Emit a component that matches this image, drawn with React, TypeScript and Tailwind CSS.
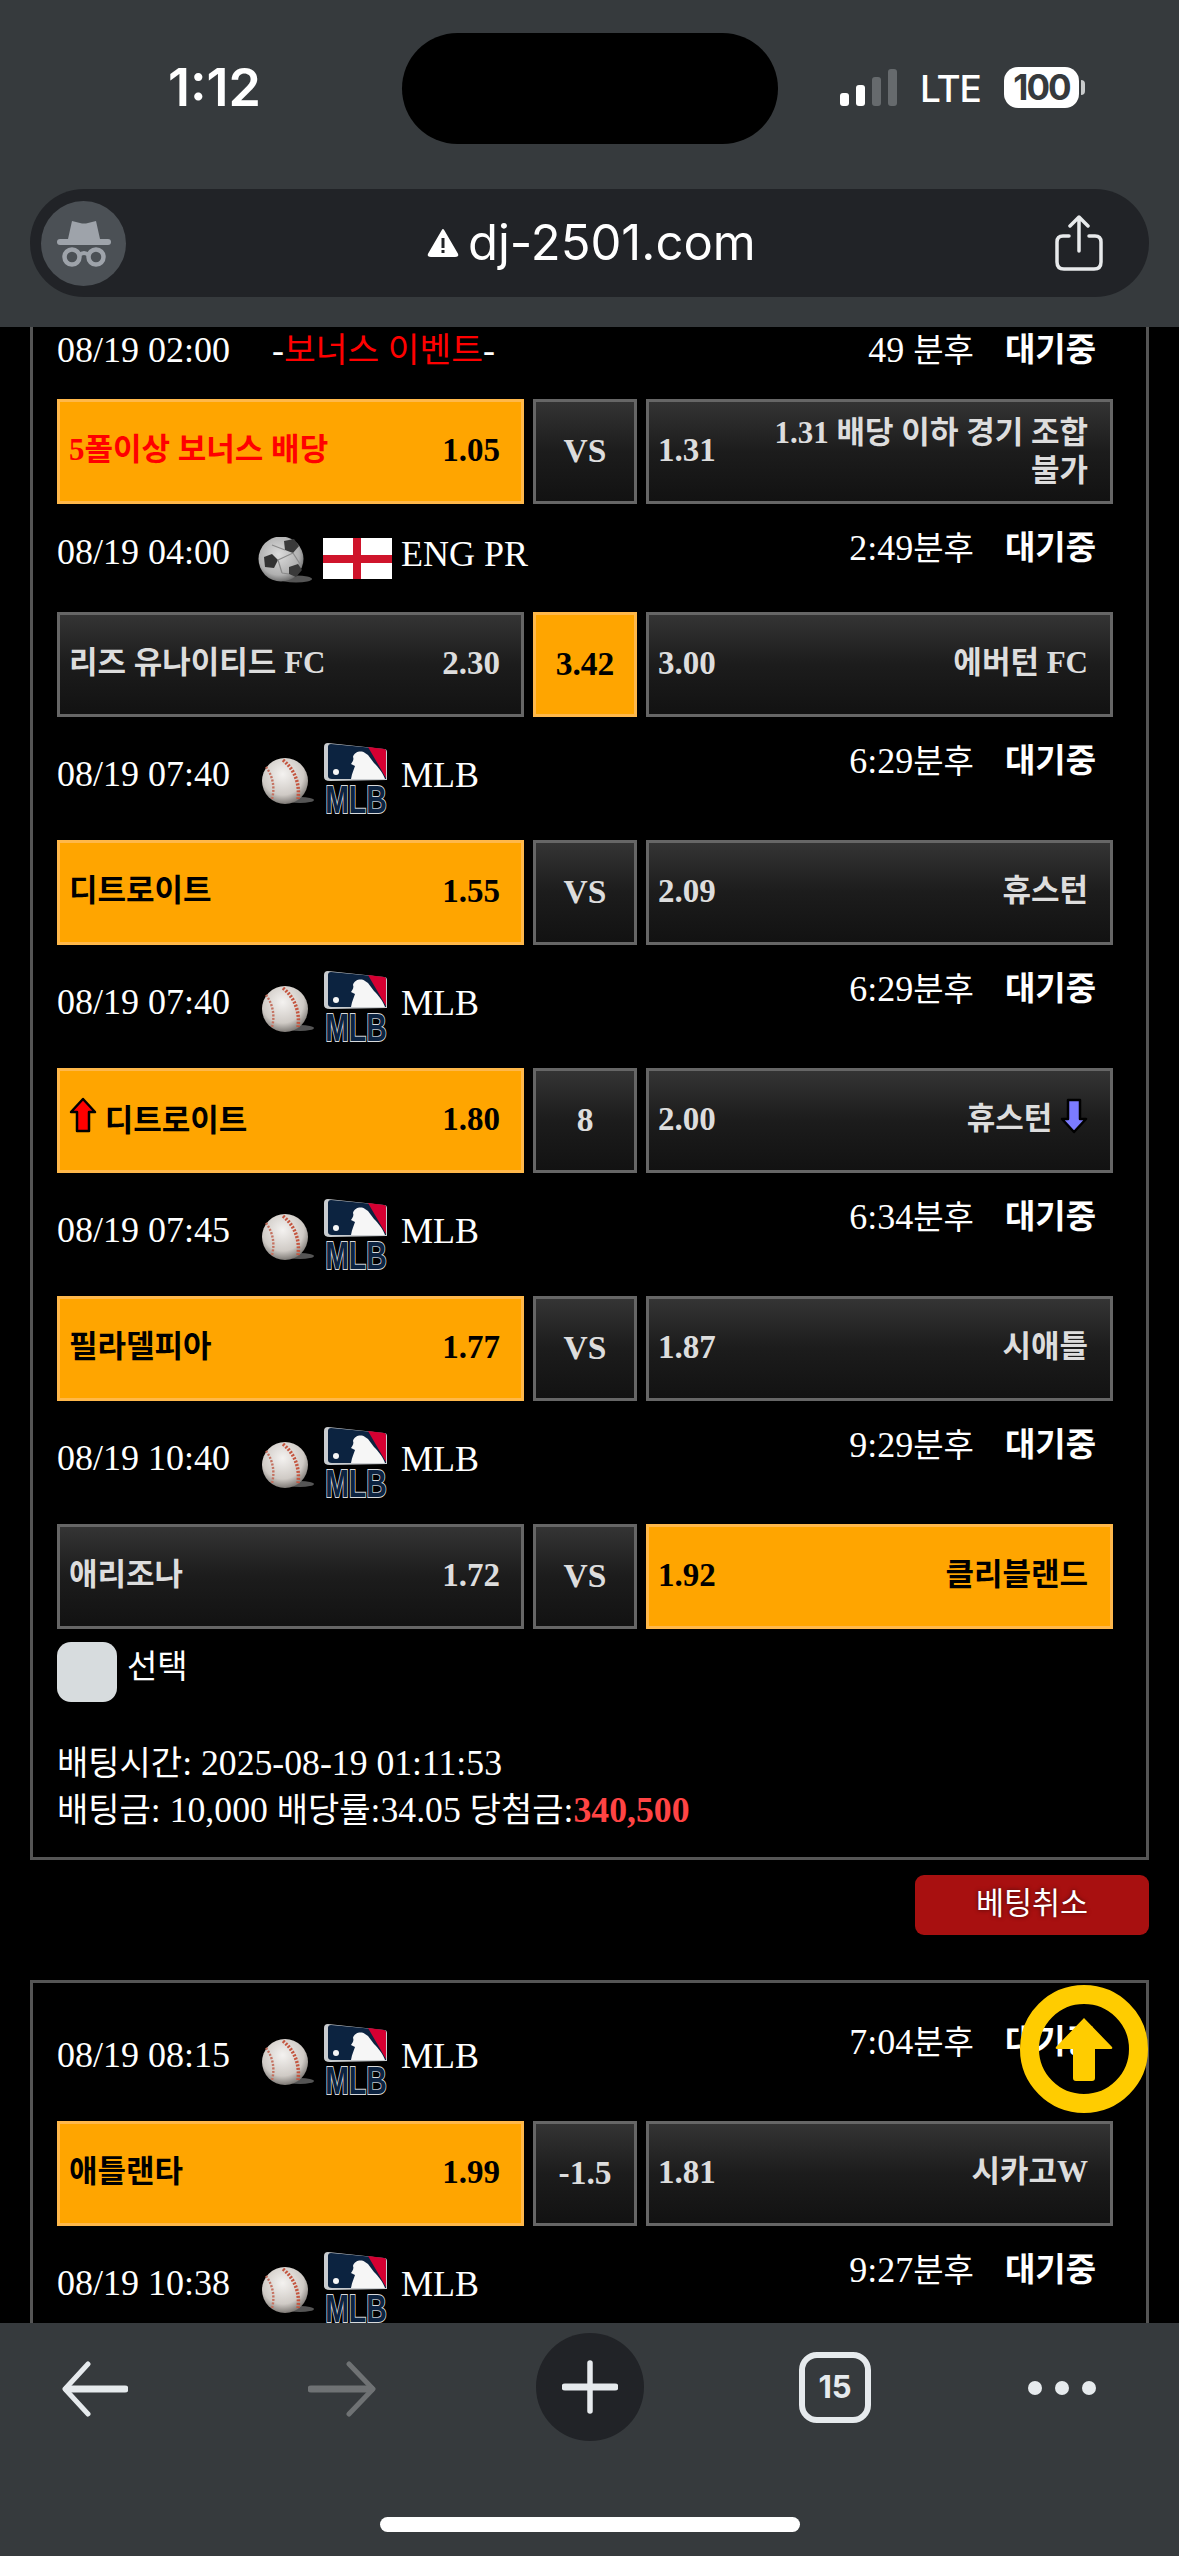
import React from "react";

const serif = "[font-family:'Liberation_Serif','Noto_Sans_CJK_KR',serif]";

function K({ children }: { children: React.ReactNode }) {
  return <span className="text-[33px]">{children}</span>;
}

function SoccerBall() {
  return (
    <svg width="54" height="46" viewBox="0 0 54 46" className="shrink-0">
      <defs>
        <radialGradient id="sb" cx="45%" cy="40%" r="65%">
          <stop offset="0%" stopColor="#dcdcdc" />
          <stop offset="70%" stopColor="#b0b0b0" />
          <stop offset="100%" stopColor="#5a5a5a" />
        </radialGradient>
      </defs>
      <ellipse cx="38" cy="42" rx="16" ry="3.5" fill="#555" />
      <circle cx="23" cy="22" r="22.5" fill="url(#sb)" />
      <polygon points="26,4 36,2 41,9 35,16 27,13" fill="#3a3a3a" />
      <polygon points="6,20 14,17 20,23 16,31 7,30" fill="#333" />
      <polygon points="31,30 40,27 44,33 38,40 31,37" fill="#3a3a3a" />
      <path d="M27 13 L14 8 M20 23 L35 16 M20 23 L24 36 M35 16 L42 27 M24 36 L31 37" stroke="#8a8a8a" strokeWidth="1.2" fill="none" />
    </svg>
  );
}

function Baseball() {
  return (
    <svg width="52" height="46" viewBox="0 0 52 46" className="shrink-0">
      <defs>
        <radialGradient id="bb" cx="45%" cy="35%" r="70%">
          <stop offset="0%" stopColor="#f4f2f0" />
          <stop offset="65%" stopColor="#cfcac5" />
          <stop offset="100%" stopColor="#6a6662" />
        </radialGradient>
      </defs>
      <ellipse cx="38" cy="42" rx="14" ry="3" fill="#555" />
      <circle cx="23" cy="23" r="23" fill="url(#bb)" />
      <path d="M21 2 C33 12 38 26 36 41" stroke="#c4553f" strokeWidth="3.5" strokeDasharray="2 1.5" fill="none" />
      <path d="M4 9 C11 18 13 30 10 41" stroke="#c4705f" strokeWidth="2.4" strokeDasharray="2 1.5" fill="none" />
    </svg>
  );
}

function MlbLogo() {
  return (
    <svg width="64" height="82" viewBox="0 0 64 82" className="shrink-0 -mb-[12px]">
      <path d="M4 0 L60 6 Q63 6 63 9 L63 37 L6 38 Q0 38 0 34 L0 4 Q0 0 4 0 Z" fill="#c9cccf" />
      <path d="M7 1 L60 6 Q62 6 62 9 L62 36 L8 36 Q4 36 4 33 L4 4 Q4 1 7 1 Z" fill="#0c2340" />
      <path d="M44 4 L60 6 Q62 6 62 9 L62 35 Z" fill="#d50032" />
      <path d="M27 36 C28 30 30 26 31 23 L27 21 C29 18 30 16 29 14 C30 9 37 7 41 10 L44 12 L50 20 C54 24 59 30 61 36 Z" fill="#f6f6f6" />
      <circle cx="12" cy="29" r="3" fill="#f6f6f6" />
      <text x="32" y="51.5" transform="scale(1 1.35)" textAnchor="middle" fontFamily="Liberation Sans" fontWeight="700" fontSize="28.5" fill="#0c2340" stroke="#d8dadc" strokeWidth="1.4" paintOrder="stroke">
        MLB
      </text>
    </svg>
  );
}

function EnglandFlag() {
  return (
    <div className="relative w-[69px] h-[41px] bg-white shrink-0">
      <div className="absolute left-[30px] top-0 w-[8px] h-full bg-[#cf142b]" />
      <div className="absolute left-0 top-[17px] w-full h-[8px] bg-[#cf142b]" />
    </div>
  );
}

function MatchHeader({
  date,
  time,
  league,
}: {
  date: string;
  time: React.ReactNode;
  league?: "mlb" | "eng" | "bonus";
}) {
  const height = league === "mlb" ? "h-[123px]" : league === "eng" ? "h-[108px]" : "h-[93px]";
  return (
    <div className={`flex justify-between ${height} text-[36px] leading-[40px] text-white`}>
      {league === "mlb" && (
        <div className="flex items-start">
          <span className="mt-[37px] w-[205px]">{date}</span>
          <div className="mt-[41px]">
            <Baseball />
          </div>
          <div className="mt-[26px] ml-[10px]">
            <MlbLogo />
          </div>
          <span className="mt-[38px] ml-[13px]">MLB</span>
        </div>
      )}
      {league === "eng" && (
        <div className="flex items-start">
          <span className="mt-[28px] w-[201px]">{date}</span>
          <div className="mt-[33px]">
            <SoccerBall />
          </div>
          <div className="mt-[34px] ml-[11px]">
            <EnglandFlag />
          </div>
          <span className="mt-[30px] ml-[9px]">ENG PR</span>
        </div>
      )}
      {league === "bonus" && (
        <div className="flex items-start">
          <span className="mt-[24px] w-[215px]">{date}</span>
          <span className="mt-[24px]">
            -<span className="text-[34.5px] text-[#ff0000]">보너스 이벤트</span>-
          </span>
        </div>
      )}
      <div className="flex items-start mt-[24px] pr-[50px]">
        <span>{time}</span>
        <span className="ml-[31px] text-[33px] font-bold">대기중</span>
      </div>
    </div>
  );
}

function Side({
  name,
  odds,
  on,
  right,
  nameClass,
}: {
  name: React.ReactNode;
  odds: string;
  on?: boolean;
  right?: boolean;
  nameClass?: string;
}) {
  const tone = on
    ? "border-[#ffb84a] bg-[#ffa500] text-black"
    : "border-[#666666] bg-linear-to-b from-[#343434] via-[#1c1c1c] to-[#121212] text-[#dddddd]";
  return (
    <div
      className={`flex items-center justify-between border-[3px] font-bold ${tone} ${
        right ? "flex-row-reverse pl-[9px] pr-[22px]" : "pl-[9px] pr-[21px]"
      }`}
    >
      <span className={`text-[31px] leading-[38px] ${right ? "text-right" : ""} ${nameClass ?? "-mt-[4px]"}`}>{name}</span>
      <span className="text-[33px] -mt-[1px]">{odds}</span>
    </div>
  );
}

function BetRow({
  home,
  away,
  mid,
  midOn,
}: {
  home: React.ReactNode;
  away: React.ReactNode;
  mid: string;
  midOn?: boolean;
}) {
  return (
    <div className="grid grid-cols-[467px_104px_467px] gap-x-[9px] h-[105px]">
      {home}
      <div
        className={`flex items-center justify-center border-[3px] font-bold text-[33.5px] ${
          midOn
            ? "border-[#ffb84a] bg-[#ffa500] text-black"
            : "border-[#666666] bg-linear-to-b from-[#343434] via-[#1c1c1c] to-[#121212] text-[#dddddd]"
        }`}
      >
        {mid}
      </div>
      {away}
    </div>
  );
}

function UpMark() {
  return (
    <svg width="28" height="36" viewBox="0 0 28 36" className="inline-block align-top -mt-[5px]">
      <path d="M14 2 L26 15 L20 15 L20 34 L8 34 L8 15 L2 15 Z" fill="#ff0000" stroke="#000" strokeWidth="2.5" strokeLinejoin="round" />
    </svg>
  );
}

function DownMark() {
  return (
    <svg width="28" height="36" viewBox="0 0 28 36" className="inline-block align-top -mt-[2px]">
      <path d="M14 34 L26 21 L20 21 L20 2 L8 2 L8 21 L2 21 Z" fill="#7b7bff" stroke="#000" strokeWidth="2.5" strokeLinejoin="round" />
    </svg>
  );
}

function StatusBar() {
  return (
    <div className="relative h-[177px] shrink-0">
      <span className="absolute left-[168px] top-[58px] text-[52px] leading-[60px] font-semibold text-white [font-family:Inter,sans-serif]">
        1:12
      </span>
      <div className="absolute left-[402px] top-[33px] w-[376px] h-[111px] rounded-full bg-black" />
      <div className="absolute left-[840px] top-[69px] flex items-end gap-[7px] h-[37px]">
        <div className="w-[9px] h-[13px] rounded-[3px] bg-white" />
        <div className="w-[9px] h-[21px] rounded-[3px] bg-white" />
        <div className="w-[9px] h-[29px] rounded-[3px] bg-[#666a6d]" />
        <div className="w-[9px] h-[37px] rounded-[3px] bg-[#666a6d]" />
      </div>
      <span className="absolute left-[920px] top-[66px] text-[37px] leading-[46px] font-medium tracking-[-1px] text-white [font-family:Inter,sans-serif]">
        LTE
      </span>
      <div className="absolute left-[1004px] top-[67px] flex h-[41px] w-[75px] items-center justify-center rounded-[14px] bg-white text-[35px] font-bold tracking-[-2px] text-[#363a3d] [font-family:Inter,sans-serif]">
        100
      </div>
      <div className="absolute left-[1081px] top-[80px] h-[15px] w-[4px] rounded-r-full bg-[#c8cacb]" />
    </div>
  );
}

function UrlBar() {
  return (
    <div className="flex items-center h-[108px] mt-[12px] mx-[30px] rounded-full bg-[#212327] pl-[11px] pr-[46px]">
      <div className="flex h-[85px] w-[85px] items-center justify-center rounded-full bg-[#4b5055]">
        <svg width="54" height="48" viewBox="0 0 54 48" fill="#9ea3aa">
          <path d="M15 2 L23 4 Q27 5 31 4 L39 2 L43 20 L11 20 Z" />
          <rect x="0" y="20" width="54" height="6" rx="3" />
          <circle cx="15" cy="38" r="7.5" fill="none" stroke="#9ea3aa" strokeWidth="4.5" />
          <circle cx="39" cy="38" r="7.5" fill="none" stroke="#9ea3aa" strokeWidth="4.5" />
          <path d="M22 36 Q27 32 32 36" fill="none" stroke="#9ea3aa" strokeWidth="4" />
        </svg>
      </div>
      <div className="flex items-center gap-[9px] text-white ml-[301px]">
        <svg width="32" height="30" viewBox="0 0 32 30">
          <path d="M16 2 L30 26 Q31 28 28 28 L4 28 Q1 28 2 26 Z" fill="#fff" stroke="#fff" strokeWidth="2" strokeLinejoin="round" />
          <rect x="14.5" y="10" width="3" height="10" fill="#212327" />
          <rect x="14.5" y="22" width="3" height="3" fill="#212327" />
        </svg>
        <span className="text-[49px] leading-[56px] [font-family:Inter,sans-serif]">dj-2501.com</span>
      </div>
      <svg width="48" height="56" viewBox="0 0 48 56" className="ml-auto" fill="none" stroke="#e8eaec" strokeWidth="3.5" strokeLinecap="round" strokeLinejoin="round">
        <path d="M14 21 L8 21 Q2 21 2 27 L2 47 Q2 54 9 54 L39 54 Q46 54 46 47 L46 27 Q46 21 40 21 L34 21" />
        <path d="M24 36 L24 2 M15 11 L24 2 L33 11" />
      </svg>
    </div>
  );
}

function BottomBar() {
  return (
    <div className="relative h-[233px] shrink-0 bg-[#363a3d]">
      <div className="flex items-start pl-[62px] pt-[10px]">
        <svg width="66" height="56" viewBox="0 0 66 56" className="mt-[28px]" fill="none" stroke="#e6eaed" strokeLinecap="round" strokeLinejoin="round">
          <path d="M26 3 L3 28 L26 53" strokeWidth="5" />
          <path d="M5 28 L63 28" strokeWidth="7" />
        </svg>
        <svg width="68" height="56" viewBox="0 0 68 56" className="mt-[28px] ml-[180px]" fill="none" stroke="#6f7274" strokeLinecap="round" strokeLinejoin="round">
          <path d="M41 3 L65 28 L41 53" strokeWidth="5" />
          <path d="M3 28 L63 28" strokeWidth="7" />
        </svg>
        <div className="flex h-[108px] w-[108px] items-center justify-center rounded-full bg-[#212327] ml-[160px]">
          <svg width="56" height="54" viewBox="0 0 56 54" stroke="#e6eaed" strokeLinecap="round">
            <path d="M28 3 L28 51" strokeWidth="5.5" />
            <path d="M3 27 L53 27" strokeWidth="7" />
          </svg>
        </div>
        <div className="ml-[155px] mt-[19px] flex h-[71px] w-[72px] items-center justify-center rounded-[18px] border-[6px] border-[#e6eaed] text-[31px] font-bold text-[#e6eaed] [font-family:Inter,sans-serif]">
          15
        </div>
        <div className="mt-[48px] ml-[157px] flex gap-[13px]">
          <div className="h-[14px] w-[14px] rounded-full bg-[#e6eaed]" />
          <div className="h-[14px] w-[14px] rounded-full bg-[#e6eaed]" />
          <div className="h-[14px] w-[14px] rounded-full bg-[#e6eaed]" />
        </div>
      </div>
      <div className="absolute left-[380px] bottom-[24px] h-[15px] w-[420px] rounded-full bg-white" />
    </div>
  );
}

function ScrollTop() {
  return (
    <div className="absolute left-[1020px] top-[1985px] flex h-[128px] w-[128px] items-center justify-center rounded-full border-[19px] border-[#ffcc00]">
      <svg width="60" height="66" viewBox="0 0 60 66">
        <path d="M30 2 L58 31 Q59 33 57 33 L41 33 L41 62 Q41 65 38 65 L22 65 Q19 65 19 62 L19 33 L3 33 Q1 33 2 31 Z" fill="#ffcc00" />
      </svg>
    </div>
  );
}

export default function App() {
  return (
    <div className={`relative flex h-[2556px] w-[1179px] flex-col overflow-hidden bg-black ${serif}`}>
      <div className="h-[327px] shrink-0 bg-[#363a3d]">
        <StatusBar />
        <UrlBar />
      </div>

      <div className="min-h-0 flex-1 overflow-hidden">
        <div className="mx-[30px] -mt-[21px] w-[1119px] border-x-[3px] border-b-[3px] border-[#555555] pl-[24px] pb-[23px]">
          <MatchHeader date="08/19 02:00" league="bonus" time={<>49 <K>분후</K></>} />
          <BetRow
            home={<Side on name={<span className="text-[#ff0000]">5폴이상 보너스 배당</span>} odds="1.05" />}
            mid="VS"
            away={<Side right odds="1.31" name={<>1.31 배당 이하 경기 조합<br />불가</>} nameClass="mt-0" />}
          />
          <MatchHeader date="08/19 04:00" league="eng" time={<>2:49<K>분후</K></>} />
          <BetRow
            home={<Side name="리즈 유나이티드 FC" odds="2.30" />}
            mid="3.42"
            midOn
            away={<Side right name="에버턴 FC" odds="3.00" />}
          />
          <MatchHeader date="08/19 07:40" league="mlb" time={<>6:29<K>분후</K></>} />
          <BetRow
            home={<Side on name="디트로이트" odds="1.55" />}
            mid="VS"
            away={<Side right name="휴스턴" odds="2.09" />}
          />
          <MatchHeader date="08/19 07:40" league="mlb" time={<>6:29<K>분후</K></>} />
          <BetRow
            home={<Side on name={<><UpMark /> 디트로이트</>} odds="1.80" nameClass="mt-0" />}
            mid="8"
            away={<Side right name={<>휴스턴 <DownMark /></>} odds="2.00" />}
          />
          <MatchHeader date="08/19 07:45" league="mlb" time={<>6:34<K>분후</K></>} />
          <BetRow
            home={<Side on name="필라델피아" odds="1.77" />}
            mid="VS"
            away={<Side right name="시애틀" odds="1.87" />}
          />
          <MatchHeader date="08/19 10:40" league="mlb" time={<>9:29<K>분후</K></>} />
          <BetRow
            home={<Side name="애리조나" odds="1.72" />}
            mid="VS"
            away={<Side right on name="클리블랜드" odds="1.92" />}
          />

          <div className="mt-[13px] flex items-start">
            <div className="h-[60px] w-[60px] rounded-[14px] bg-[#d7dcde]" />
            <span className="ml-[10px] mt-[5px] text-[33px] leading-[40px] text-white">선택</span>
          </div>
          <div className="mt-[38px] text-[35.7px] leading-[47px] text-white">
            <div>
              <span className="text-[34px]">배팅시간</span>: 2025-08-19 01:11:53
            </div>
            <div>
              <span className="text-[34px]">배팅금</span>: 10,000 <span className="text-[34px]">배당률</span>:34.05 <span className="text-[34px]">당첨금</span>:<span className="font-bold text-[#ff4444]">340,500</span>
            </div>
          </div>
        </div>

        <div className="mt-[15px] mr-[30px] flex justify-end">
          <button className="h-[60px] w-[234px] rounded-[9px] bg-[#a81010] text-[30.5px] text-white [text-shadow:0_0_4px_rgba(0,0,0,0.6)]">
            베팅취소
          </button>
        </div>

        <div className="mx-[30px] mt-[45px] w-[1119px] border-x-[3px] border-t-[3px] border-[#555555] pl-[24px] pt-[15px]">
          <MatchHeader date="08/19 08:15" league="mlb" time={<>7:04<K>분후</K></>} />
          <BetRow
            home={<Side on name="애틀랜타" odds="1.99" />}
            mid="-1.5"
            away={<Side right name="시카고W" odds="1.81" />}
          />
          <MatchHeader date="08/19 10:38" league="mlb" time={<>9:27<K>분후</K></>} />
        </div>
      </div>

      <BottomBar />
      <ScrollTop />
    </div>
  );
}
